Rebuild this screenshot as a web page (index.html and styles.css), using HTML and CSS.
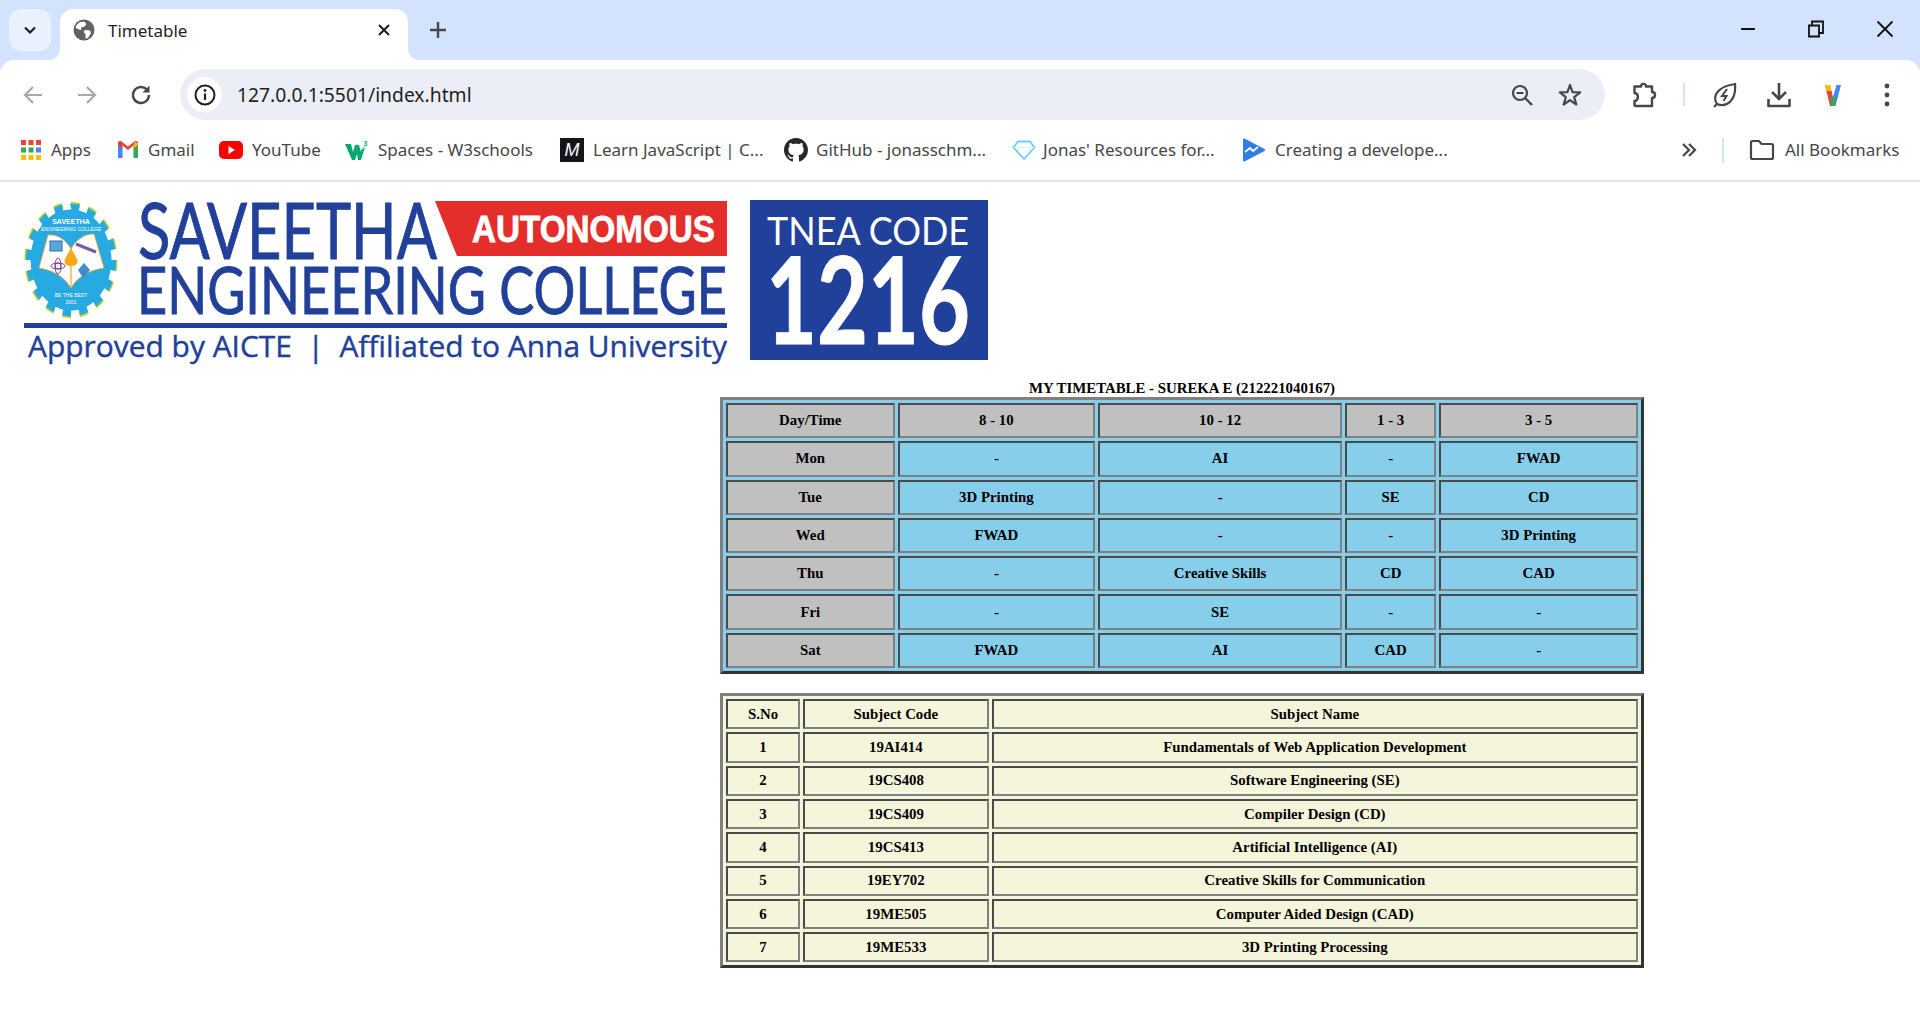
FILE: index.html
```html
<!DOCTYPE html>
<html lang="en">
<head>
    <meta charset="UTF-8">
    <title>Timetable</title>
    <link rel="stylesheet" href="styles.css">
</head>
<body>
    <header class="browser">
        <div class="tabstrip">
            <div class="tab-search">
                <svg width="16" height="16" viewBox="0 0 16 16"><path d="M3 5.5 8 10.5 13 5.5" fill="none" stroke="#1f1f1f" stroke-width="2.2"/></svg>
            </div>
            <div class="tab">
                <svg class="favicon" width="22" height="22" viewBox="0 0 22 22">
                    <circle cx="11" cy="11" r="10.5" fill="#5f6368"/>
                    <path d="M6 3.5 11 2.5 13.5 5 11 8 8.5 8 8 11 3.5 9.5 2.5 7.5Z M12 11 17 11.5 18 14 15 19 12.5 19.5 12.5 15 10.5 13Z" fill="#fff"/>
                </svg>
                <span class="tab-title">Timetable</span>
                <svg class="tab-close" width="14" height="14" viewBox="0 0 14 14"><path d="M2 2 12 12M12 2 2 12" stroke="#1f1f1f" stroke-width="2"/></svg>
            </div>
            <svg class="new-tab" width="18" height="18" viewBox="0 0 18 18"><path d="M9 1V17M1 9H17" stroke="#474747" stroke-width="2.4"/></svg>
            <div class="window-controls">
                <div class="win-btn"><svg width="16" height="16" viewBox="0 0 16 16"><path d="M1 8H15" stroke="#111" stroke-width="2"/></svg></div>
                <div class="win-btn"><svg width="16" height="18" viewBox="0 0 16 18"><path d="M1 5.5H11V16.5H1ZM4 5V1.5H15V13H11.5" fill="none" stroke="#111" stroke-width="1.8"/></svg></div>
                <div class="win-btn"><svg width="18" height="18" viewBox="0 0 18 18"><path d="M1.5 1.5 16.500 16.500M16.500 1.500 1.500 16.500" stroke="#111" stroke-width="1.8"/></svg></div>
            </div>
        </div>

        <div class="toolbar">
            <div class="tool-btn"><svg width="22" height="22" viewBox="0 0 22 22"><path d="M20 11H3M11 3 3 11 11 19" fill="none" stroke="#a8a8a8" stroke-width="2.2"/></svg></div>
            <div class="tool-btn"><svg width="22" height="22" viewBox="0 0 22 22"><path d="M2 11H19M11 3 19 11 11 19" fill="none" stroke="#a8a8a8" stroke-width="2.2"/></svg></div>
            <div class="tool-btn"><svg width="24" height="24" viewBox="0 0 24 24"><path d="M20 12A8 8 0 1 1 17.500 6.200" fill="none" stroke="#474747" stroke-width="2.400"/><path d="M20.500 2.500V9.500H13.500Z" fill="#474747"/></svg></div>
            <div class="omnibox">
                <div class="site-info">
                    <svg width="22" height="22" viewBox="0 0 22 22"><circle cx="11" cy="11" r="9.500" fill="none" stroke="#1f1f1f" stroke-width="2"/><path d="M11 9.500V16" stroke="#1f1f1f" stroke-width="2.200"/><circle cx="11" cy="6.500" r="1.400" fill="#1f1f1f"/></svg>
                </div>
                <span class="url">127.0.0.1:5501/index.html</span>
                <div class="omni-btn"><svg width="24" height="24" viewBox="0 0 24 24"><circle cx="10" cy="10" r="7" fill="none" stroke="#474747" stroke-width="2.200"/><path d="M15 15 22 22" stroke="#474747" stroke-width="2.400"/><path d="M6.500 10H13.500" stroke="#474747" stroke-width="2"/></svg></div>
                <div class="omni-btn"><svg width="26" height="26" viewBox="0 0 26 26"><path d="M13 3 15.600 10.200 23.200 10.400 17.200 15.100 19.300 22.500 13 18.200 6.700 22.500 8.800 15.100 2.800 10.400 10.400 10.200Z" fill="none" stroke="#474747" stroke-width="2.200" stroke-linejoin="round"/></svg></div>
            </div>
            <div class="tool-btn"><svg width="26" height="28" viewBox="0 0 26 28"><path d="M2.500 5.500H9C9 2 14 2 14 5.500H20V11C24 11 24 17 20 17V25H3.500C2.500 25 2.500 24.500 2.500 23.500V20C7 19.500 7 12.500 2.500 12Z" fill="none" stroke="#474747" stroke-width="2.400" stroke-linejoin="round"/></svg></div>
            <div class="tool-sep"></div>
            <div class="tool-btn"><svg width="26" height="28" viewBox="0 0 26 28"><path d="M5 23C1 17 2.500 6 23 3 24.500 19 15 27 5 23ZM2 26 5 23" fill="none" stroke="#474747" stroke-width="2.200"/><path d="M15 8 10 15H14.500L11.500 20" fill="none" stroke="#474747" stroke-width="2"/></svg></div>
            <div class="tool-btn"><svg width="26" height="28" viewBox="0 0 26 28"><path d="M13 2V17M6 11 13 18 20 11" fill="none" stroke="#474747" stroke-width="2.600"/><path d="M2.500 18V25H23.500V18" fill="none" stroke="#474747" stroke-width="2.600" stroke-linejoin="round"/></svg></div>
            <div class="tool-btn"><svg width="18" height="24" viewBox="0 0 18 24"><path d="M1 2H6L9 14 9 23 6 23Z" fill="#ea4335"/><path d="M1 2H6L7.500 8H2.600Z" fill="#fbbc04"/><path d="M17 2H12.500L9 14V23H11.500Z" fill="#4285f4"/><path d="M6 14 9 14 12 14 10.800 23H7.500Z" fill="#34a853"/></svg></div>
            <div class="tool-btn"><svg width="6" height="24" viewBox="0 0 6 24"><circle cx="3" cy="3" r="2.400" fill="#474747"/><circle cx="3" cy="12" r="2.400" fill="#474747"/><circle cx="3" cy="21" r="2.400" fill="#474747"/></svg></div>
        </div>

        <div class="bookmarks">
            <div class="bookmark bm-apps">
                <svg class="bm-icon" width="22" height="22" viewBox="0 0 22 22">
                    <g fill="#ea4335"><rect x="1" y="1" width="5" height="5"/><rect x="8.500" y="1" width="5" height="5"/><rect x="16" y="1" width="5" height="5"/></g>
                    <g fill="#34a853"><rect x="1" y="8.500" width="5" height="5"/><rect x="8.500" y="8.500" width="5" height="5"/></g>
                    <rect x="16" y="8.500" width="5" height="5" fill="#4285f4"/>
                    <g fill="#fbbc04"><rect x="1" y="16" width="5" height="5"/><rect x="8.500" y="16" width="5" height="5"/><rect x="16" y="16" width="5" height="5"/></g>
                </svg>
                <span>Apps</span>
            </div>
            <div class="bookmark bm-gmail">
                <svg class="bm-icon" width="22" height="20" viewBox="0 0 22 20">
                    <path d="M1 18V4L5.500 7.500V18Z" fill="#4285f4"/>
                    <path d="M16.500 18V7.500L21 4V18Z" fill="#34a853"/>
                    <path d="M1 5V3C1 1 3.500 0.500 4.500 1.500L11 6.500 17.500 1.500C18.500 0.500 21 1 21 3V5L16.500 8.500V5.500L11 10 5.500 5.500V8.500Z" fill="#ea4335"/>
                    <path d="M16.500 5.500 18 2 21 3V5L16.500 8.500Z" fill="#fbbc04"/>
                </svg>
                <span>Gmail</span>
            </div>
            <div class="bookmark bm-youtube">
                <svg class="bm-icon bm-icon-wide" width="24" height="20" viewBox="0 0 24 20"><rect y="1" width="24" height="18" rx="5" fill="#f00"/><path d="M9.500 6 16 10 9.500 14Z" fill="#fff"/></svg>
                <span>YouTube</span>
            </div>
            <div class="bookmark bm-spaces">
                <svg class="bm-icon bm-icon-wide" width="24" height="22" viewBox="0 0 24 22">
                    <path d="M0 5H6L8 13 10 6H14L16 13 16.500 10.500 20 8 16 21H13L12 15 10 21H7Z" fill="#04aa6d"/>
                    <text x="18.500" y="6.500" class="w3-sup">3</text>
                </svg>
                <span>Spaces - W3schools</span>
            </div>
            <div class="bookmark bm-learn">
                <div class="m-icon">M</div>
                <span>Learn JavaScript | C...</span>
            </div>
            <div class="bookmark bm-github">
                <svg class="bm-icon" width="24" height="24" viewBox="0 0 16 16"><path fill="#24292f" d="M8 0C3.580 0 0 3.580 0 8c0 3.540 2.290 6.530 5.470 7.590.4.070.55-.170.55-.380 0-.190-.010-.820-.010-1.490-2.010.370-2.530-.490-2.690-.940-.090-.230-.480-.940-.820-1.130-.280-.150-.680-.520-.010-.530.630-.010 1.080.580 1.230.820.720 1.210 1.870.870 2.330.660.070-.520.280-.870.510-1.070-1.780-.200-3.640-.890-3.640-3.950 0-.870.310-1.590.820-2.150-.080-.200-.360-1.020.080-2.120 0 0 .670-.210 2.200.820.640-.180 1.320-.270 2-.270.680 0 1.360.090 2 .270 1.530-1.040 2.200-.820 2.200-.820.440 1.100.160 1.920.080 2.120.510.560.820 1.270.820 2.150 0 3.070-1.870 3.750-3.650 3.950.290.250.540.730.540 1.480 0 1.070-.010 1.930-.010 2.200 0 .210.150.460.550.380A8.013 8.013 0 0016 8c0-4.420-3.580-8-8-8z"/></svg>
                <span>GitHub - jonasschm...</span>
            </div>
            <div class="bookmark bm-jonas">
                <svg class="bm-icon bm-icon-wide" width="24" height="22" viewBox="0 0 24 22"><path d="M6 2.500H18L22.500 8.500 12 20 1.500 8.500Z" fill="none" stroke="#6ccdf2" stroke-width="1.800"/><path d="M2 8.500H22" stroke="#d9f2fb" stroke-width="1"/></svg>
                <span>Jonas' Resources for...</span>
            </div>
            <div class="bookmark bm-creating">
                <svg class="bm-icon" width="22" height="24" viewBox="0 0 22 24"><path d="M1 1.500 21 12 1 22.500Z" fill="#2f7ee8" stroke="#2f7ee8" stroke-width="2" stroke-linejoin="round"/><path d="M2 14 7 10 10 13 15 9" fill="none" stroke="#fff" stroke-width="1.800"/></svg>
                <span>Creating a develope...</span>
            </div>
            <div class="more-marks"><svg width="16" height="14" viewBox="0 0 16 14"><path d="M2 1 8 7 2 13M8 1 14 7 8 13" fill="none" stroke="#474747" stroke-width="2.200"/></svg></div>
            <div class="marks-sep"></div>
            <div class="bookmark bm-all">
                <svg class="bm-icon bm-folder" width="26" height="22" viewBox="0 0 26 22"><path d="M2 3.500C2 2.500 2.500 2 3.500 2H10L12.500 5H22.500C23.500 5 24 5.500 24 6.500V18.500C24 19.500 23.500 20 22.500 20H3.500C2.500 20 2 19.500 2 18.500Z" fill="none" stroke="#474747" stroke-width="2.200"/></svg>
                <span>All Bookmarks</span>
            </div>
        </div>
    </header>

    <main>
        <svg class="logo" width="1000" height="198" viewBox="0 182 1000 198">
            <!-- college emblem, the gear is taller than it is wide -->
            <g transform="translate(71 260) scale(1 1.25)">
                <circle r="43" fill="none" stroke="#b5d334" stroke-width="7" pathLength="32" stroke-dasharray="1 1"/>
                <circle r="42.500" fill="none" stroke="#27a9e1" stroke-width="5" pathLength="32" stroke-dasharray="1 1"/>
                <circle r="40.500" fill="#27a9e1"/>
            </g>
            <path d="M48 235C58 234 66 240 71 249 76 240 84 234 94 234L104 268C90 270 78 276 71 288 64 276 52 270 39 268Z" fill="#fff" stroke="#f7a81b" stroke-width="0.800"/>
            <rect x="50" y="241" width="12" height="10" fill="#5aa5dc" stroke="#2a6fb5"/>
            <path d="M76 244 96 252" stroke="#7a5aa6" stroke-width="3"/>
            <circle cx="58" cy="266" r="3" fill="none" stroke="#7b3f98"/>
            <ellipse cx="58" cy="266" rx="7" ry="3" fill="none" stroke="#7b3f98"/>
            <ellipse cx="58" cy="266" rx="3" ry="8" fill="none" stroke="#7b3f98"/>
            <path d="M71 248 77 259C79 264 75 266 71 266 67 266 63 264 65 259Z" fill="#f7a81b"/>
            <path d="M71 266V287" stroke="#f7a81b" stroke-width="1.200"/>
            <path d="M84 263 90 270 83 278 78 270Z" fill="#3f8ccb"/>
            <text x="71" y="224" class="emblem-title">SAVEETHA</text>
            <text x="71" y="231" class="emblem-sub">ENGINEERING COLLEGE</text>
            <text x="71" y="297" class="emblem-sub">BE THE BEST</text>
            <text x="71" y="304" class="emblem-sub">2001</text>

            <text x="138" y="259" class="logo-name" font-size="78" textLength="299" lengthAdjust="spacingAndGlyphs">SAVEETHA</text>
            <text x="137" y="314" class="logo-name" font-size="65" textLength="590" lengthAdjust="spacingAndGlyphs">ENGINEERING COLLEGE</text>
            <path d="M435 201H727V256H457Z" fill="#e42e2b"/>
            <text x="472" y="242" class="logo-auto" textLength="243" lengthAdjust="spacingAndGlyphs">AUTONOMOUS</text>
            <rect x="24" y="323" width="703" height="5" fill="#21409a"/>
            <text x="28" y="357" class="logo-approved" textLength="699" lengthAdjust="spacingAndGlyphs">Approved by AICTE  |  Affiliated to Anna University</text>

            <rect x="750" y="200" width="238" height="160" fill="#21409a"/>
            <text x="767" y="245" class="tnea-label" textLength="202" lengthAdjust="spacingAndGlyphs">TNEA CODE</text>
            <text x="766" y="344" class="tnea-code" textLength="204" lengthAdjust="spacingAndGlyphs">1216</text>
        </svg>

        <div class="tables">
            <table class="timetable">
                <caption>MY TIMETABLE - SUREKA E (212221040167)</caption>
                <colgroup><col class="tt-1"><col class="tt-2"><col class="tt-3"><col class="tt-4"><col class="tt-5"></colgroup>
                <tr><th>Day/Time</th><th>8 - 10</th><th>10 - 12</th><th>1 - 3</th><th>3 - 5</th></tr>
                <tr><th>Mon</th><td>-</td><td>AI</td><td>-</td><td>FWAD</td></tr>
                <tr><th>Tue</th><td>3D Printing</td><td>-</td><td>SE</td><td>CD</td></tr>
                <tr><th>Wed</th><td>FWAD</td><td>-</td><td>-</td><td>3D Printing</td></tr>
                <tr><th>Thu</th><td>-</td><td>Creative Skills</td><td>CD</td><td>CAD</td></tr>
                <tr><th>Fri</th><td>-</td><td>SE</td><td>-</td><td>-</td></tr>
                <tr><th>Sat</th><td>FWAD</td><td>AI</td><td>CAD</td><td>-</td></tr>
            </table>

            <table class="subjects">
                <colgroup><col class="sb-1"><col class="sb-2"><col class="sb-3"></colgroup>
                <tr><th>S.No</th><th>Subject Code</th><th>Subject Name</th></tr>
                <tr><td>1</td><td>19AI414</td><td>Fundamentals of Web Application Development</td></tr>
                <tr><td>2</td><td>19CS408</td><td>Software Engineering (SE)</td></tr>
                <tr><td>3</td><td>19CS409</td><td>Compiler Design (CD)</td></tr>
                <tr><td>4</td><td>19CS413</td><td>Artificial Intelligence (AI)</td></tr>
                <tr><td>5</td><td>19EY702</td><td>Creative Skills for Communication</td></tr>
                <tr><td>6</td><td>19ME505</td><td>Computer Aided Design (CAD)</td></tr>
                <tr><td>7</td><td>19ME533</td><td>3D Printing Processing</td></tr>
            </table>
        </div>
    </main>
</body>
</html>
```

FILE: styles.css
```css
body {
    margin: 0;
    background-color: #ffffff;
    font-family: 'Liberation Serif', serif;
    color: #000000;
}

/* browser window */
.browser {
    background-color: #d3e3fd;
    font-family: 'Noto Sans', 'Open Sans', sans-serif;
    color: #474747;
}
.tabstrip {
    display: flex;
    align-items: flex-start;
    height: 60px;
}
.tab-search {
    display: flex;
    align-items: center;
    justify-content: center;
    width: 42px;
    height: 42px;
    margin: 9px 0 0 9px;
    border-radius: 12px;
    background-color: #e9f0fe;
}
.tab {
    position: relative;
    display: flex;
    align-items: center;
    width: 348px;
    height: 42px;
    margin: 9px 0 0 9px;
    padding: 0 0 9px;
    border-radius: 13px 13px 0 0;
    background-color: #ffffff;
}
.tab::before,
.tab::after {
    content: "";
    position: absolute;
    bottom: 0;
    width: 12px;
    height: 12px;
}
.tab::before {
    left: -12px;
    background: radial-gradient(circle at 0 0, #d3e3fd 12px, #ffffff 12.5px);
}
.tab::after {
    right: -12px;
    background: radial-gradient(circle at 100% 0, #d3e3fd 12px, #ffffff 12.5px);
}
.favicon {
    margin-left: 13px;
}
.tab-title {
    flex: 1;
    margin-left: 13px;
    font-size: 17px;
    color: #1f1f1f;
}
.tab-close {
    margin-right: 17px;
}
.new-tab {
    margin: 21px 0 0 21px;
}
.window-controls {
    display: flex;
    margin-left: auto;
}
.win-btn {
    display: flex;
    align-items: center;
    justify-content: center;
    width: 68px;
    height: 58px;
}
.win-btn:last-child {
    width: 70px;
}

.toolbar {
    display: flex;
    align-items: center;
    height: 51px;
    padding: 9px 6px 9px 6px;
    border-radius: 14px 14px 0 0;
    background-color: #ffffff;
}
.tool-btn {
    display: flex;
    align-items: center;
    justify-content: center;
    flex: none;
    width: 54px;
    height: 51px;
}
.omnibox {
    display: flex;
    align-items: center;
    flex: 1;
    height: 51px;
    margin: 0 13px 0 12px;
    padding: 0 11px 0 7px;
    border-radius: 26px;
    background-color: #ebeef7;
}
.site-info {
    display: flex;
    align-items: center;
    justify-content: center;
    width: 35px;
    height: 35px;
    border-radius: 50%;
    background-color: #ffffff;
}
.url {
    flex: 1;
    margin-left: 15px;
    font-size: 19.3px;
    color: #1f1f1f;
}
.omni-btn {
    display: flex;
    align-items: center;
    justify-content: center;
    width: 48px;
    height: 40px;
}
.tool-sep {
    flex: none;
    width: 2px;
    height: 23px;
    margin: 0 13px 0 11px;
    background-color: #d3e3fd;
}

.bookmarks {
    display: flex;
    align-items: center;
    height: 42px;
    padding: 0 0 9px 20px;
    border-bottom: 2px solid #e3e3e3;
    background-color: #ffffff;
    font-size: 17px;
}
.bookmark {
    display: flex;
    align-items: center;
    flex: none;
    white-space: nowrap;
}
.bookmark span {
    margin-top: -2px;
}
.bm-icon {
    flex: none;
    margin-right: 9px;
}
.bm-apps { width: 97px; }
.bm-gmail { width: 102px; }
.bm-youtube { width: 126px; }
.bm-spaces { width: 215px; }
.bm-learn { width: 224px; }
.bm-github { width: 228px; }
.bm-jonas { width: 231px; }
.bm-creating { width: 230px; }
.bm-all { width: 171px; }
.bm-github .bm-icon { margin-right: 8px; }
.bm-jonas .bm-icon { margin-right: 7px; }
.bm-creating .bm-icon { margin-right: 10px; }
.bm-folder { margin-right: 10px; }
.w3-sup {
    font: bold 7px 'Liberation Sans', sans-serif;
    fill: #04aa6d;
}
.m-icon {
    flex: none;
    width: 24px;
    height: 24px;
    margin-right: 9px;
    background-color: #14141a;
    color: #ffffff;
    font: italic 18px/24px 'Liberation Sans', sans-serif;
    text-align: center;
}
.more-marks {
    display: flex;
    justify-content: center;
    width: 20px;
    margin-left: auto;
}
.marks-sep {
    width: 2px;
    height: 25px;
    margin: 0 25px 0 23px;
    background-color: #d3e3fd;
}

/* college logo */
.logo {
    display: block;
}
.emblem-title {
    font: bold 7px 'Liberation Sans', sans-serif;
    fill: #ffffff;
    text-anchor: middle;
}
.emblem-sub {
    font: 5px 'Liberation Sans', sans-serif;
    fill: #ffffff;
    text-anchor: middle;
}
.logo-name {
    font-family: 'Lato', sans-serif;
    font-weight: 400;
    fill: #21409a;
    stroke: #21409a;
    stroke-width: 0.9;
}
.logo-auto {
    font: bold 37px 'Liberation Sans', sans-serif;
    fill: #ffffff;
    stroke: #ffffff;
    stroke-width: 0.8;
}
.logo-approved {
    font: 30px 'Open Sans', sans-serif;
    fill: #21409a;
    stroke: #21409a;
    stroke-width: 0.4;
    white-space: pre;
}
.tnea-label {
    font: 38px 'Lato', sans-serif;
    fill: #ffffff;
}
.tnea-code {
    font: bold 121px 'Lato', sans-serif;
    fill: #ffffff;
    stroke: #ffffff;
    stroke-width: 1;
}

/* tables */
.tables {
    width: 924px;
    margin-left: 720px;
}
table {
    table-layout: fixed;
    width: 924px;
    border-collapse: separate;
    border-spacing: 3.6px;
    border-style: solid;
    border-width: 3px;
    border-color: #808080 #333333 #333333 #808080;
    font-size: 14.85px;
    font-weight: bold;
    text-align: center;
}
caption {
    height: 17px;
    line-height: 17px;
}
th, td {
    padding: 0;
    border-style: solid;
    border-width: 2px;
    border-color: #4a4a4a #808080 #808080 #4a4a4a;
}
.timetable {
    background-color: #87ceeb;
}
.timetable th, .timetable td {
    height: 31.3px;
}
.timetable th {
    background-color: #c0c0c0;
}
.tt-1 { width: 168px; }
.tt-2 { width: 197px; }
.tt-3 { width: 243px; }
.tt-4 { width: 91px; }
.tt-5 { width: 198px; }
.subjects {
    margin-top: 19px;
    background-color: #f5f5dc;
}
.subjects th, .subjects td {
    height: 26.3px;
}
.sb-1 { width: 74px; }
.sb-2 { width: 185px; }
.sb-3 { width: 645px; }
```
